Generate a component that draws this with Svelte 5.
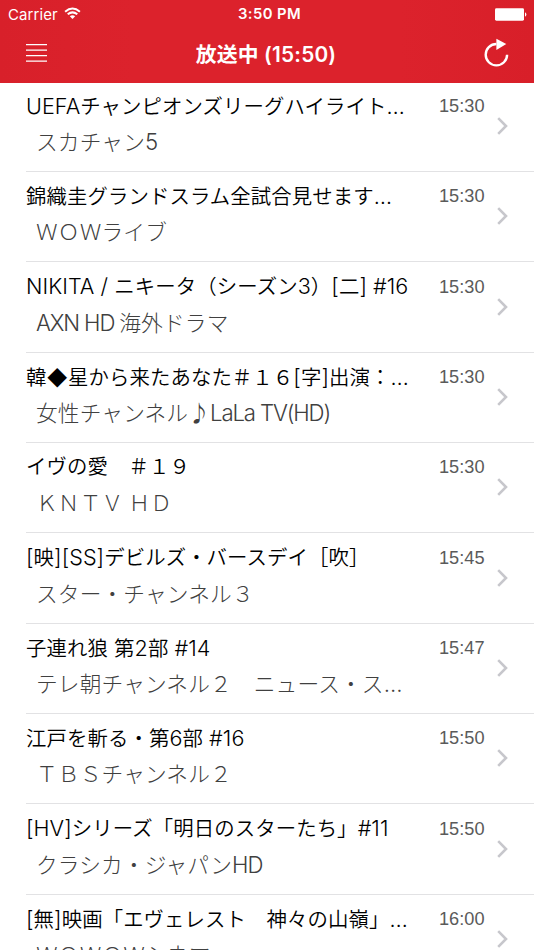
<script>
  const programs = [
    { title: 'UEFAチャンピオンズリーグハイライト…', channel: 'スカチャン5', time: '15:30' },
    { title: '錦織圭グランドスラム全試合見せます…', channel: 'ＷＯＷライブ', time: '15:30' },
    { title: 'NIKITA / ニキータ（シーズン3）[二] #16', channel: 'AXN HD 海外ドラマ', time: '15:30' },
    { title: '韓◆星から来たあなた＃１６[字]出演：…', channel: '女性チャンネル♪LaLa TV(HD)', time: '15:30' },
    { title: 'イヴの愛　＃１９', channel: 'ＫＮＴＶ ＨＤ', time: '15:30' },
    { title: '[映][SS]デビルズ・バースデイ［吹］', channel: 'スター・チャンネル３', time: '15:45' },
    { title: '子連れ狼 第2部 #14', channel: 'テレ朝チャンネル２　ニュース・ス…', time: '15:47' },
    { title: '江戸を斬る・第6部 #16', channel: 'ＴＢＳチャンネル２', time: '15:50' },
    { title: '[HV]シリーズ「明日のスターたち」#11', channel: 'クラシカ・ジャパンHD', time: '15:50' },
    { title: '[無]映画「エヴェレスト　神々の山嶺」…', channel: 'ＷＯＷＯＷシネマ', time: '16:00' }
  ];

  // Latin and Japanese runs are sized separately
  const runs = (s) => s.split(/([\x20-\x7e…]+)/).filter(Boolean);
  const isLatin = (s) => /^[\x20-\x7e…]/.test(s);
</script>

<div class="screen">
  <header>
    <div class="status">
      <div class="carrier">
        <span>Carrier</span>
        <svg width="17" height="13" viewBox="0 0 17 13" fill="none" stroke="#fff" stroke-width="2">
          <path d="M1.1 4.7Q8.5 -1.6 15.9 4.7M3.7 7.3Q8.5 3.4 13.3 7.3" />
          <path d="M8.5 12 5.8 9.2Q8.5 7.1 11.2 9.2Z" fill="#fff" stroke="none" />
        </svg>
      </div>
      <span class="clock">3:50 PM</span>
      <svg class="battery" width="32" height="13" viewBox="0 0 32 13" fill="#fff">
        <rect x="0" y="0.3" width="29" height="12.4" rx="1.4" />
        <path d="M30 4.3Q31.4 5 31.4 6.5T30 8.7Z" />
      </svg>
    </div>
    <nav>
      <svg class="menu" width="22" height="20" viewBox="0 0 22 20" stroke="#fff" stroke-width="1.3">
        <path d="M0 1.6H21M0 7.2H21M0 12.7H21M0 18.2H21" />
      </svg>
      <h1>放送中 (15:50)</h1>
      <svg class="reload" width="26" height="30" viewBox="0 0 26 30" fill="none">
        <path d="M12.4 6A10.7 10.7 0 1 0 23.1 16.7" stroke="#fff" stroke-width="2.4" />
        <path d="M12.4 .7 22.3 5.9 12.4 12Z" fill="#fff" />
      </svg>
    </nav>
  </header>

  <ul>
    {#each programs as p}
      <li>
        <div class="text">
          <div class="title">{#each runs(p.title) as r}<span class:latin={isLatin(r)}>{r}</span>{/each}</div>
          <div class="channel">{#each runs(p.channel) as r}<span class:latin={isLatin(r)}>{r}</span>{/each}</div>
        </div>
        <time>{p.time}</time>
        <svg class="chevron" width="12" height="18" viewBox="0 0 12 18" fill="none" stroke="#c7c7cc" stroke-width="2.6">
          <path d="M1.2 1.2 9 9 1.2 16.8" />
        </svg>
      </li>
    {/each}
  </ul>
</div>

<style>
  .screen {
    width: 534px;
    height: 950px;
    overflow: hidden;
    background: #fff;
    display: flex;
    flex-direction: column;
    font-family: Inter, 'Noto Sans CJK JP', sans-serif;
  }
  header {
    flex: none;
    height: 83px;
    color: #fff;
    background: linear-gradient(90deg, #d8202a, #dc222c 25%, #dc222c 75%, #d81f29);
  }
  .status {
    display: grid;
    grid-template-columns: 1fr auto 1fr;
    align-items: center;
    height: 28px;
    padding: 0 7px 0 8px;
    font-size: 15px;
  }
  .carrier {
    display: flex;
    align-items: center;
    gap: 6px;
    letter-spacing: 0.1px;
  }
  .carrier svg { margin-top: -2px; }
  .clock { font-size: 14.8px; font-weight: 600; letter-spacing: 0.4px; padding-left: 4px; }
  .battery { justify-self: end; }
  nav {
    display: flex;
    align-items: center;
    justify-content: space-between;
    height: 53px;
    padding: 0 24px 0 26px;
  }
  .menu { margin-top: -3px; }
  .reload { margin-top: -3px; }
  h1 {
    margin: 0;
    font-size: 20.8px;
    letter-spacing: 0.2px;
    line-height: 28px;
    font-weight: 600;
  }
  ul {
    list-style: none;
    margin: 0;
    padding: 0;
    margin-top: -1.4px;
  }
  li {
    display: flex;
    align-items: flex-start;
    height: 90.33px;
    box-sizing: border-box;
    margin-left: 26px;
    border-bottom: 1px solid #e2e2e4;
  }
  .text { width: 413px; flex: none; white-space: nowrap; }
  .title {
    margin-top: 8px;
    height: 32px;
    line-height: 32px;
    font-size: 20.4px;
    letter-spacing: 0.1px;
    color: #000;
    font-weight: 350;
  }
  .title .latin { font-size: 21.6px; letter-spacing: 0.05px; }
  .channel {
    margin-top: 4.4px;
    padding-left: 10px;
    height: 32px;
    line-height: 32px;
    font-size: 21.7px;
    letter-spacing: 0.15px;
    font-weight: 300;
    color: #404040;
  }
  .channel .latin { font-size: 22.2px; letter-spacing: -1.15px; }
  time {
    width: 58px;
    margin-top: 14.3px;
    line-height: 20px;
    font-family: 'Liberation Sans', sans-serif;
    font-size: 18.2px;
    color: #5a5a5a;
  }
  .chevron { margin-top: 35.5px; }
</style>
